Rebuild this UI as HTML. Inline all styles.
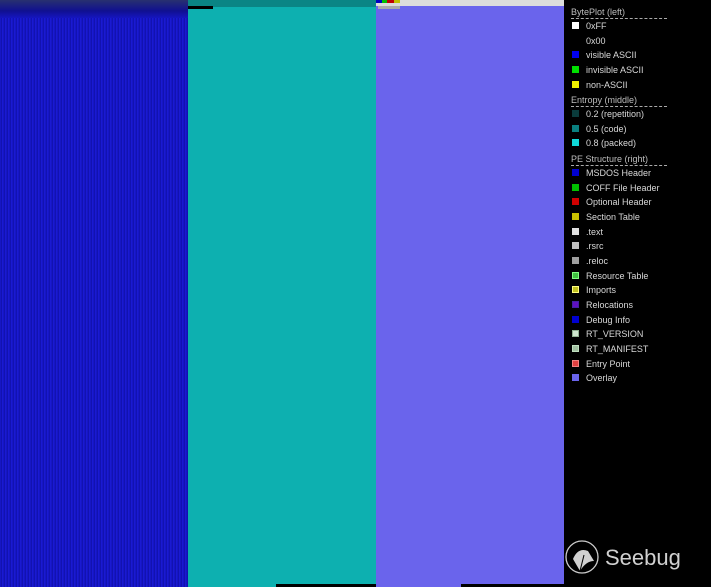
<!DOCTYPE html>
<html><head><style>
*{margin:0;padding:0}
body{width:711px;height:587px;background:#000;position:relative;overflow:hidden;font-family:"Liberation Sans",sans-serif}
.p{position:absolute;top:0;height:587px}
.h{position:absolute;left:571px;color:#bdbdbd;font-size:9px;width:96px;border-bottom:1px dashed #aaa;line-height:11px}
.i{position:absolute;left:586px;color:#d8d8d8;font-size:9px;line-height:11px}
.s{position:absolute;left:572px;width:7px;height:7px;box-sizing:border-box}
</style></head><body>
<div class="p" style="left:0;width:188px;background:repeating-linear-gradient(90deg,#1616c4 0 1px,#1212b0 1px 2px,#1a1ad2 2px 3px),#1616c0;"></div>
<div class="p" style="left:0;width:188px;height:18px;background:linear-gradient(#283070,#101090 60%,#1515c0)"></div>
<div class="p" style="left:188px;width:188px;background:#0db0b0"></div>
<div class="p" style="left:188px;width:188px;height:7px;background:#0a8585"></div>
<div class="p" style="left:188px;width:25px;top:6px;height:3px;background:#000"></div>
<div class="p" style="left:376px;width:188px;background:#6a64ec"></div>
<div class="p" style="left:376px;width:188px;height:6px;background:#dcdcdc"></div>
<div class="p" style="left:376px;width:24px;height:3px;background:linear-gradient(90deg,#0000c0 25%,#00c000 25% 45%,#c00000 45% 75%,#c0c000 75%)"></div>
<div class="p" style="left:378px;width:22px;top:6px;height:3px;background:#aaa"></div>
<div class="p" style="left:276px;width:100px;top:584px;height:3px;background:#000"></div>
<div class="p" style="left:461px;width:103px;top:584px;height:3px;background:#000"></div>

<div class="h" style="top:7px">BytePlot (left)</div>
<div class="s" style="top:22px;background:#fff"></div><div class="i" style="top:21px">0xFF</div>
<div class="i" style="top:36px">0x00</div>
<div class="s" style="top:51px;background:#0000f0"></div><div class="i" style="top:50px">visible ASCII</div>
<div class="s" style="top:66px;background:#00e000"></div><div class="i" style="top:65px">invisible ASCII</div>
<div class="s" style="top:81px;background:#f0f000"></div><div class="i" style="top:80px">non-ASCII</div>
<div class="h" style="top:95px">Entropy (middle)</div>
<div class="s" style="top:110px;background:#0a3b3b"></div><div class="i" style="top:109px">0.2 (repetition)</div>
<div class="s" style="top:125px;background:#0a8080"></div><div class="i" style="top:124px">0.5 (code)</div>
<div class="s" style="top:139px;background:#10d8d8"></div><div class="i" style="top:138px">0.8 (packed)</div>
<div class="h" style="top:154px">PE Structure (right)</div>
<div class="s" style="top:169px;background:#0000d0"></div><div class="i" style="top:168px">MSDOS Header</div>
<div class="s" style="top:184px;background:#00c000"></div><div class="i" style="top:183px">COFF File Header</div>
<div class="s" style="top:198px;background:#d00000"></div><div class="i" style="top:197px">Optional Header</div>
<div class="s" style="top:213px;background:#c8c000"></div><div class="i" style="top:212px">Section Table</div>
<div class="s" style="top:228px;background:#e0e0e0"></div><div class="i" style="top:227px">.text</div>
<div class="s" style="top:242px;background:#c0c0c0"></div><div class="i" style="top:241px">.rsrc</div>
<div class="s" style="top:257px;background:#a0a0a0"></div><div class="i" style="top:256px">.reloc</div>
<div class="s" style="top:272px;background:#40c040;border:1.5px solid #80ff80"></div><div class="i" style="top:271px">Resource Table</div>
<div class="s" style="top:286px;background:#c0c020;border:1.5px solid #ffff80"></div><div class="i" style="top:285px">Imports</div>
<div class="s" style="top:301px;background:#6010c0;border:1.5px solid #4020a0"></div><div class="i" style="top:300px">Relocations</div>
<div class="s" style="top:316px;background:#0000d0"></div><div class="i" style="top:315px">Debug Info</div>
<div class="s" style="top:330px;background:#d0e8d0;border:1.5px solid #90b090"></div><div class="i" style="top:329px">RT_VERSION</div>
<div class="s" style="top:345px;background:#a0c0a0;border:1.5px solid #c0e0c0"></div><div class="i" style="top:344px">RT_MANIFEST</div>
<div class="s" style="top:360px;background:#e04040;border:1.5px solid #f08080"></div><div class="i" style="top:359px">Entry Point</div>
<div class="s" style="top:374px;background:#6a64ec"></div><div class="i" style="top:373px">Overlay</div>

<svg style="position:absolute;left:564px;top:539px" width="40" height="40" viewBox="0 0 40 40">
<circle cx="18" cy="18" r="16" fill="none" stroke="#ccc" stroke-width="1.3"/>
<path d="M9 20 Q14 8 24 12 L30 22 Q22 22 16 32 Z" fill="#d0d0d0"/>
<path d="M16 32 L20 16" stroke="#000" stroke-width="1"/>
</svg>
<div style="position:absolute;left:605px;top:545px;color:#d0d0d0;font-size:22px;line-height:26px">Seebug</div>
</body></html>
